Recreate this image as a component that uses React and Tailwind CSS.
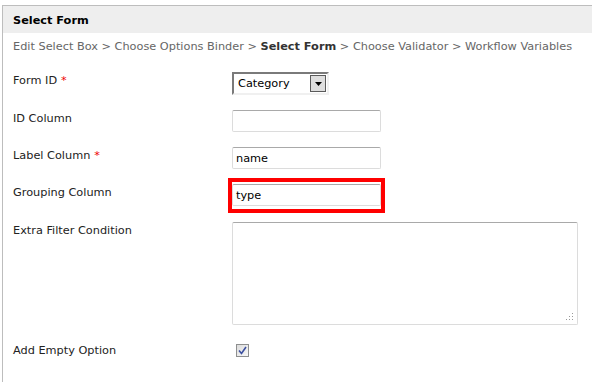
import React from "react";

const Star = () => <span className="text-[#e00] ml-[4px]">*</span>;

function TextInput({ value = "" }) {
  return (
    <div className="w-[149px] h-[22px] border border-[#dcdcdc] border-t-[#a9a9a9] rounded-[2px] bg-white flex items-center pl-[3px] pt-[1px] text-black">
      {value}
    </div>
  );
}

export default function App() {
  return (
    <div
      className="w-[592px] h-[382px] bg-white overflow-hidden pt-[5px] text-[11.3px] leading-[16px]"
      style={{ fontFamily: '"DejaVu Sans", Verdana, sans-serif' }}
    >
      <div className="ml-[2px] h-full border-t border-l border-[#bdbdbd]">
        <div className="h-[27px] bg-[#eeeeee] pl-[10px] pt-[2px] flex items-center font-bold text-black">
          Select Form
        </div>
        <div className="h-[26px] pl-[10px] pt-[2px] flex items-center text-[#666666] whitespace-nowrap">
          Edit Select Box &gt; Choose Options Binder &gt;&nbsp;
          <span className="font-bold text-[#333]">Select Form</span>
          &nbsp;&gt; Choose Validator &gt; Workflow Variables
        </div>

        <div className="flex flex-col pl-[10px] text-[#222]">
          {/* Form ID */}
          <div className="flex items-start mt-[13px]">
            <div className="w-[219px] pt-[1px]">
              Form ID<Star />
            </div>
            <div className="w-[97px] h-[23px] border-2 border-t-[#7a7a7a] border-l-[#7a7a7a] border-r-[#f0f0f0] border-b-[#f0f0f0] bg-white flex items-center justify-between pl-[4px] pr-[1px] text-black">
              <span className="pt-[1px]">Category</span>
              <div className="w-[16px] h-[17px] bg-[#dedede] border border-[#5a5a5a] flex items-center justify-center">
                <svg width="7" height="4" viewBox="0 0 7 4">
                  <path d="M0 0h7L3.5 4z" fill="#000" />
                </svg>
              </div>
            </div>
          </div>

          {/* ID Column */}
          <div className="flex items-start mt-[15px]">
            <div className="w-[219px] pt-[1px]">ID Column</div>
            <TextInput />
          </div>

          {/* Label Column */}
          <div className="flex items-start mt-[15px]">
            <div className="w-[219px] pt-[1px]">
              Label Column<Star />
            </div>
            <TextInput value="name" />
          </div>

          {/* Grouping Column */}
          <div className="flex items-start mt-[15px]">
            <div className="w-[219px] pt-[1px]">Grouping Column</div>
            <div className="relative">
              <TextInput value="type" />
              <div className="absolute -left-[4px] -top-[6px] w-[157px] h-[35px] border-[4px] border-[#ff0000]" />
            </div>
          </div>

          {/* Extra Filter Condition */}
          <div className="flex items-start mt-[16px]">
            <div className="w-[219px] pt-[1px]">Extra Filter Condition</div>
            <div className="relative w-[346px] h-[103px] border border-[#dcdcdc] border-t-[#a9a9a9] rounded-[2px] bg-white">
              <svg className="absolute right-[3px] bottom-[3px]" width="8" height="8" viewBox="0 0 8 8">
                <rect x="6" y="0" width="1" height="1" fill="#999" />
                <rect x="3" y="3" width="1" height="1" fill="#999" />
                <rect x="6" y="3" width="1" height="1" fill="#999" />
                <rect x="0" y="6" width="1" height="1" fill="#999" />
                <rect x="3" y="6" width="1" height="1" fill="#999" />
                <rect x="6" y="6" width="1" height="1" fill="#999" />
              </svg>
            </div>
          </div>

          {/* Add Empty Option */}
          <div className="flex items-start mt-[17px]">
            <div className="w-[223px] pt-[1px]">Add Empty Option</div>
            <div className="mt-[2px] w-[13px] h-[13px] border border-[#8e8f8f] bg-gradient-to-br from-[#dcdcdc] to-[#f8f8f8] flex items-center justify-center">
              <svg width="9" height="9" viewBox="0 0 9 9">
                <path d="M1 4.5 L3.5 7.5 L8 1" stroke="#3b4fa0" strokeWidth="1.6" fill="none" />
              </svg>
            </div>
          </div>
        </div>
      </div>
    </div>
  );
}
